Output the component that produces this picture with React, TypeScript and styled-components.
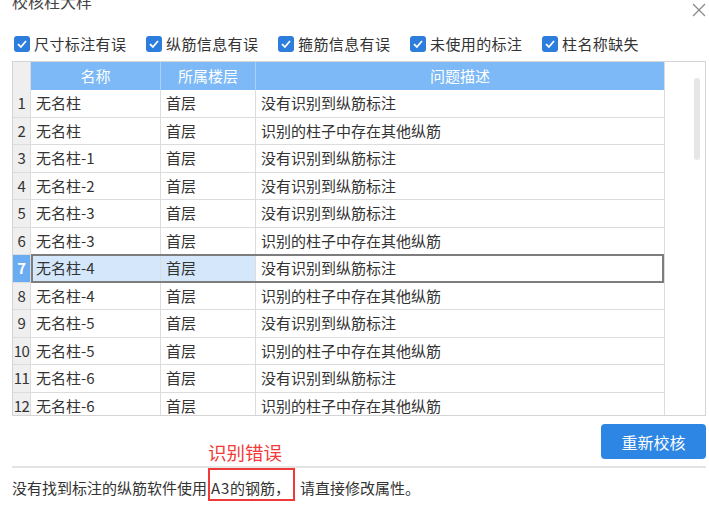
import styled, { createGlobalStyle } from "styled-components";

const GlobalStyle = createGlobalStyle`
  html, body {
    margin: 0;
    padding: 0;
    background: #ffffff;
    overflow: hidden;
  }
  body {
    font-family: "Noto Sans CJK SC", "Noto Sans", sans-serif;
    color: #333333;
  }
`;

const filters = ["尺寸标注有误", "纵筋信息有误", "箍筋信息有误", "未使用的标注", "柱名称缺失"];

const rows = [
  { name: "无名柱", floor: "首层", desc: "没有识别到纵筋标注" },
  { name: "无名柱", floor: "首层", desc: "识别的柱子中存在其他纵筋" },
  { name: "无名柱-1", floor: "首层", desc: "没有识别到纵筋标注" },
  { name: "无名柱-2", floor: "首层", desc: "没有识别到纵筋标注" },
  { name: "无名柱-3", floor: "首层", desc: "没有识别到纵筋标注" },
  { name: "无名柱-3", floor: "首层", desc: "识别的柱子中存在其他纵筋" },
  { name: "无名柱-4", floor: "首层", desc: "没有识别到纵筋标注" },
  { name: "无名柱-4", floor: "首层", desc: "识别的柱子中存在其他纵筋" },
  { name: "无名柱-5", floor: "首层", desc: "没有识别到纵筋标注" },
  { name: "无名柱-5", floor: "首层", desc: "识别的柱子中存在其他纵筋" },
  { name: "无名柱-6", floor: "首层", desc: "没有识别到纵筋标注" },
  { name: "无名柱-6", floor: "首层", desc: "识别的柱子中存在其他纵筋" },
];

const selectedIndex = 6;

const App = () => {
  return (
    <>
      <GlobalStyle />
      <Page>
        <TitleBar>
          <Title>校核柱大样</Title>
          <CloseButton>
            <svg width="14" height="14" viewBox="0 0 14 14">
              <path d="M1 1 L13 13 M13 1 L1 13" stroke="#8a8a8a" strokeWidth="1.3" fill="none" />
            </svg>
          </CloseButton>
        </TitleBar>

        <Filters>
          {filters.map((f) => (
            <FilterItem key={f}>
              <CheckBox>
                <svg width="12" height="12" viewBox="0 0 12 12">
                  <path d="M2 6.2 L4.9 9 L10 3" stroke="#ffffff" strokeWidth="1.8" fill="none" />
                </svg>
              </CheckBox>
              <FilterLabel>{f}</FilterLabel>
            </FilterItem>
          ))}
        </Filters>

        <TableFrame>
          <Grid>
            <HeaderRow>
              <Corner />
              <HeadCell $w={130}>名称</HeadCell>
              <HeadCell $w={95}>所属楼层</HeadCell>
              <HeadCell $w={408} $last>问题描述</HeadCell>
            </HeaderRow>
            {rows.map((r, i) => {
              const sel = i === selectedIndex;
              return (
                <Row key={i} $selected={sel}>
                  <RowNum $selected={sel}>{i + 1}</RowNum>
                  <Cell $w={130} $tint={sel}>{r.name}</Cell>
                  <Cell $w={95} $tint={sel}>{r.floor}</Cell>
                  <Cell $w={408} $last>{r.desc}</Cell>
                </Row>
              );
            })}
          </Grid>
          <ScrollTrack>
            <ScrollThumb />
          </ScrollTrack>
        </TableFrame>

        <Actions>
          <PrimaryButton>重新校核</PrimaryButton>
        </Actions>

        <Divider />

        <Message>
          没有找到标注的纵筋软件使用<Latin>A3</Latin>的钢筋，<Pause />请直接修改属性。
        </Message>

        <ErrorTag>识别错误</ErrorTag>
        <ErrorBox />
      </Page>
    </>
  );
};

const Page = styled.div`
  position: relative;
  width: 709px;
  height: 509px;
  box-sizing: border-box;
  padding: 0 3px 0 12px;
  overflow: hidden;
`;

const TitleBar = styled.div`
  height: 26px;
  display: flex;
  justify-content: space-between;
  align-items: flex-start;
`;

const Title = styled.div`
  font-size: 16px;
  line-height: 18px;
  margin-top: -8px;
  color: #444444;
`;

const CloseButton = styled.div`
  width: 14px;
  height: 14px;
  margin-top: -2px;
`;

const Filters = styled.div`
  height: 35px;
  display: flex;
  align-items: center;
  padding-left: 2px;
`;

const FilterItem = styled.div`
  display: flex;
  align-items: center;
  width: 132px;
  gap: 4px;
`;

const CheckBox = styled.span`
  width: 16px;
  height: 16px;
  border-radius: 3px;
  background: #2c7ddc;
  display: flex;
  align-items: center;
  justify-content: center;
`;

const FilterLabel = styled.span`
  font-size: 15px;
  line-height: 20px;
  letter-spacing: 0.4px;
  color: #333333;
`;

const TableFrame = styled.div`
  width: 694px;
  height: 355px;
  box-sizing: border-box;
  border: 1px solid #d4d4d4;
  display: flex;
  overflow: hidden;
`;

const Grid = styled.div`
  width: 651px;
  display: flex;
  flex-direction: column;
  flex-shrink: 0;
`;

const HeaderRow = styled.div`
  display: flex;
  height: 28px;
  flex-shrink: 0;
`;

const Corner = styled.div`
  width: 18px;
  background: #efefef;
  border-right: 1px solid #dcdcdc;
  box-sizing: border-box;
`;

const HeadCell = styled.div<{ $w: number; $last?: boolean }>`
  width: ${(p) => p.$w}px;
  box-sizing: border-box;
  background: #7cb9f6;
  color: #ffffff;
  font-size: 15px;
  line-height: 28px;
  text-align: center;
  border-right: ${(p) => (p.$last ? "none" : "1px solid #a9d0f8")};
`;

const Row = styled.div<{ $selected?: boolean }>`
  position: relative;
  display: flex;
  height: 27.5px;
  flex-shrink: 0;

  &::after {
    content: "";
    display: ${(p) => (p.$selected ? "block" : "none")};
    position: absolute;
    left: 18px;
    right: 0;
    top: -1px;
    bottom: 0;
    border: 2px solid #7d7d7d;
    pointer-events: none;
  }
`;

const RowNum = styled.div<{ $selected?: boolean }>`
  width: 18px;
  box-sizing: border-box;
  background: ${(p) => (p.$selected ? "#69acf1" : "#efefef")};
  color: ${(p) => (p.$selected ? "#ffffff" : "#333333")};
  font-weight: ${(p) => (p.$selected ? 700 : 400)};
  border-right: 1px solid #dcdcdc;
  border-bottom: 1px solid #dcdcdc;
  font-size: 15px;
  line-height: 26.5px;
  text-align: center;
  letter-spacing: -0.5px;
  white-space: nowrap;
  overflow: hidden;
`;

const Cell = styled.div<{ $w: number; $tint?: boolean; $last?: boolean }>`
  width: ${(p) => p.$w}px;
  box-sizing: border-box;
  padding-left: 5px;
  background: ${(p) => (p.$tint ? "#d5e8fb" : "#ffffff")};
  border-right: ${(p) => (p.$last ? "none" : "1px solid #dcdcdc")};
  border-bottom: 1px solid #dcdcdc;
  font-size: 15px;
  line-height: 26.5px;
  color: #333333;
  white-space: nowrap;
`;

const ScrollTrack = styled.div`
  flex: 1;
  border-left: 1px solid #dcdcdc;
  display: flex;
  flex-direction: column;
`;

const ScrollThumb = styled.div`
  width: 6px;
  height: 82px;
  margin-top: 16px;
  margin-left: 29px;
  border-radius: 3px;
  background: #e6e6e6;
`;

const Actions = styled.div`
  display: flex;
  justify-content: flex-end;
  margin-top: 8px;
`;

const PrimaryButton = styled.button`
  width: 105px;
  height: 35px;
  border: none;
  border-radius: 4px;
  background: #2e86e4;
  color: #ffffff;
  font-family: "Noto Sans CJK SC", "Noto Sans", sans-serif;
  font-size: 16px;
  padding: 0;
`;

const Divider = styled.div`
  height: 2px;
  background: #e4e4e4;
  margin-top: 7px;
  width: 694px;
`;

const Message = styled.div`
  margin-top: 10px;
  font-size: 15px;
  line-height: 20px;
  color: #333333;
  white-space: nowrap;
`;

const Latin = styled.span`
  margin-left: 4px;
  letter-spacing: 0.8px;
`;

const Pause = styled.span`
  display: inline-block;
  width: 10px;
`;

const ErrorTag = styled.div`
  position: absolute;
  left: 208px;
  top: 440px;
  font-size: 18.5px;
  line-height: 24px;
  color: #f23a3a;
`;

const ErrorBox = styled.div`
  position: absolute;
  left: 208px;
  top: 468px;
  width: 87px;
  height: 33px;
  box-sizing: border-box;
  border: 2px solid #f03a3a;
`;

export default App;
